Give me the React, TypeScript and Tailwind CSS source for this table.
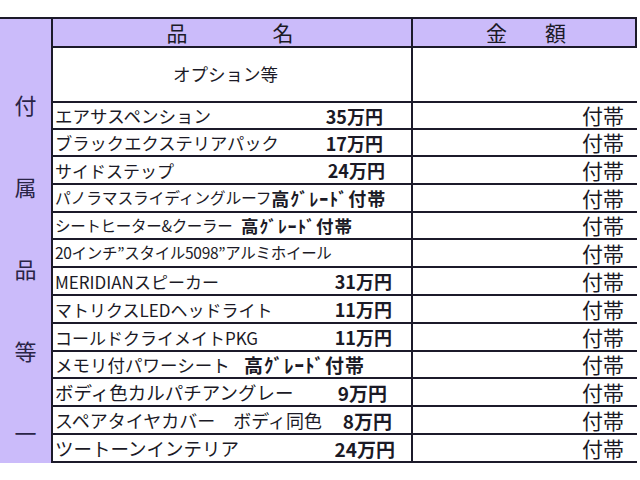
const rows = [
  { name: "エアサスペンション", nameCls: "text-[17.5px]", note: "35万円", noteCls: "pr-[28px] text-[18px]", h: "h-[27px]" },
  { name: "ブラックエクステリアパック", nameCls: "text-[17.3px]", note: "17万円", noteCls: "pr-[28px] text-[18px]", h: "h-[27px]" },
  { name: "サイドステップ", nameCls: "text-[17px]", note: "24万円", noteCls: "pr-[26px] text-[18px]", h: "h-[28px]" },
  { name: "パノラマスライディングルーフ", nameCls: "text-[15.8px] tracking-[-0.2px]", note: "高ｸﾞﾚｰﾄﾞ付帯", noteCls: "pr-[28px] text-[18px] tracking-[1px]", h: "h-[28px]" },
  { name: "シートヒーター&クーラー", nameCls: "text-[15.5px] tracking-[-0.3px]", note: "高ｸﾞﾚｰﾄﾞ付帯", noteCls: "pr-[58px] text-[17.5px] tracking-[1px]", h: "h-[27px]" },
  { name: "20インチ”スタイル5098”アルミホイール", nameCls: "text-[15.5px] tracking-[-0.3px]", note: "", noteCls: "", h: "h-[28px]" },
  { name: "MERIDIANスピーカー", nameCls: "text-[17px]", note: "31万円", noteCls: "pr-[19px] text-[18px]", h: "h-[28px]" },
  { name: "マトリクスLEDヘッドライト", nameCls: "text-[17px]", note: "11万円", noteCls: "pr-[19px] text-[18px]", h: "h-[28px]" },
  { name: "コールドクライメイトPKG", nameCls: "text-[17px]", note: "11万円", noteCls: "pr-[19px] text-[18px]", h: "h-[28px]" },
  { name: "メモリ付パワーシート", nameCls: "text-[17.5px]", note: "高ｸﾞﾚｰﾄﾞ付帯", noteCls: "pr-[46px] text-[19px] tracking-[1px]", h: "h-[27px]" },
  { name: "ボディ色カルパチアングレー", nameCls: "text-[18.5px]", note: "9万円", noteCls: "pr-[24px] text-[19px]", h: "h-[28px]" },
  { name: "スペアタイヤカバー　ボディ同色", nameCls: "text-[18px]", note: "8万円", noteCls: "pr-[19px] text-[19px]", h: "h-[28px]" },
  { name: "ツートーンインテリア", nameCls: "text-[18.5px]", note: "24万円", noteCls: "pr-[16px] text-[19px]", h: "h-[28px]" },
]

const sideChars = ["付", "属", "品", "等", "一"]

export default function App() {
  return (
    <div className="h-[480px] w-[640px] overflow-hidden bg-white pt-[17px] font-['Noto_Sans_CJK_JP',sans-serif] text-[#1b1a26]">
      <div className="flex w-[637px] border-t-2 border-[#1c1a2a]">
        {/* left purple label column */}
        <div className="flex h-[444px] w-[51px] flex-col items-center gap-[60px] bg-[#cbbbfa] pt-[74px] text-[22px] leading-[22px] text-[#2a2446]">
          {sideChars.map((c) => (
            <span key={c}>{c}</span>
          ))}
        </div>

        <div className="flex flex-1 flex-col border-l-2 border-[#1c1a2a]">
          {/* header */}
          <div className="flex h-[29px] border-b-2 border-r-2 border-[#1c1a2a] bg-[#cbbbfa] text-[21px] leading-none">
            <div className="flex w-[360px] items-center justify-center gap-[85px] border-r-2 border-[#1c1a2a] pr-[4px]">
              <span>品</span>
              <span>名</span>
            </div>
            <div className="flex flex-1 items-center justify-center gap-[38px] pl-[4px]">
              <span>金</span>
              <span>額</span>
            </div>
          </div>

          {/* options heading */}
          <div className="flex h-[55px] border-b-2 border-[#1c1a2a]">
            <div className="flex w-[360px] items-center border-r-2 border-[#1c1a2a] pl-[120px] text-[17.5px]">
              オプション等
            </div>
            <div className="flex-1" />
          </div>

          {rows.map((r) => (
            <div key={r.name} className={`flex border-b-2 border-[#1c1a2a] ${r.h}`}>
              <div className="flex w-[360px] items-center whitespace-nowrap border-r-2 border-[#1c1a2a] pl-[2px] leading-none">
                <span className={r.nameCls}>{r.name}</span>
                {r.note && <span className={`ml-auto font-bold ${r.noteCls}`}>{r.note}</span>}
              </div>
              <div className="flex flex-1 items-center justify-end pr-[13px] text-[21px] leading-none">
                付帯
              </div>
            </div>
          ))}
        </div>
      </div>
    </div>
  )
}
